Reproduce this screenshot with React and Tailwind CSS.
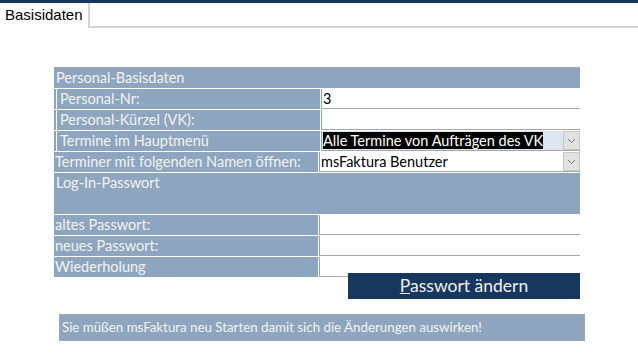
import React from "react";

const font = { fontFamily: "Lato, 'Noto Sans', sans-serif" };

const Chevron = () => (
  <svg width="9" height="6" viewBox="0 0 9 6" fill="none">
    <path d="M1 1l3.5 3.5L8 1" stroke="#7a7a7a" strokeWidth="1" />
  </svg>
);

const Row = ({ label, inset, children, valueClass = "bg-white" }) => (
  <div className="flex h-[21px] border-b border-white">
    <div
      className={`w-[265px] border-r border-white text-[14.5px] leading-[20px] text-[#f2f2f2] ${
        inset ? "ml-[2px] border-l border-white pl-[3px]" : "pl-[1px]"
      }`}
    >
      {label}
    </div>
    <div className={`flex flex-1 border-l border-[#8ea5bf] ${valueClass} border-b border-b-[#a6a6a6]`}>
      {children}
    </div>
  </div>
);

const Select = ({ value, highlighted }) => (
  <>
    <div className={`flex-1 pl-[1px] text-[14.5px] leading-[19px] ${highlighted ? "bg-[#dce6f1]" : "bg-white"}`}>
      <span className={highlighted ? "bg-black text-white" : "text-black"}>{value}</span>
    </div>
    <div className="flex w-[17px] items-center justify-center border border-[#c8c8c8] bg-[#e1e1e1]">
      <Chevron />
    </div>
  </>
);

export default function App() {
  return (
    <div className="h-[354px] w-[638px] overflow-hidden bg-white" style={font}>
      <div className="h-[3px] bg-[#17375e]" />
      <div className="flex h-[25px]">
        <div
          className="w-[88px] pl-[5px] text-[15px] leading-[24px] text-black"
          style={{ fontFamily: "'Liberation Sans', Arial, sans-serif" }}
        >
          Basisidaten
        </div>
        <div className="flex-1 border-b-2 border-l-2 border-[#d4d4d4]" />
      </div>

      <div className="ml-[54px] mt-[39px] w-[526px]">
        <div className="h-[22px] border-t border-[#a6a6a6] border-b border-b-white bg-[#8ea5bf] pl-[2px] text-[14.5px] leading-[20px] text-[#f2f2f2]">
          Personal-Basisdaten
        </div>
        <div className="bg-[#8ea5bf]">
          <Row label="Personal-Nr:" inset>
            <span className="pl-[1px] text-[14.5px] leading-[19px] text-black">3</span>
          </Row>
          <Row label="Personal-Kürzel (VK):" inset />
          <Row label="Termine im Hauptmenü" inset>
            <Select value="Alle Termine von Aufträgen des VK" highlighted />
          </Row>
          <Row label="Terminer mit folgenden Namen öffnen:">
            <Select value="msFaktura Benutzer" />
          </Row>
          <div className="h-[42px] border-b border-white pl-[2px] text-[14.5px] leading-[20px] text-[#f2f2f2]">
            Log-In-Passwort
          </div>
          <Row label="altes Passwort:" />
          <Row label="neues Passwort:" />
          <Row label="Wiederholung" />
        </div>
        <div className="flex justify-end">
          <div className="-mt-[5px] flex h-[26px] w-[232px] items-center justify-center bg-[#17375e] text-[17.5px] text-[#f2f2f2]">
            <span>
              <span className="underline">P</span>asswort ändern
            </span>
          </div>
        </div>
      </div>

      <div className="ml-[59px] mt-[15px] h-[27px] w-[526px] border border-[#a6a6a6] bg-[#8ea5bf] pl-[2px] text-[13.3px] leading-[24px] text-[#f2f2f2]">
        Sie müßen msFaktura neu Starten damit sich die Änderungen auswirken!
      </div>
    </div>
  );
}
